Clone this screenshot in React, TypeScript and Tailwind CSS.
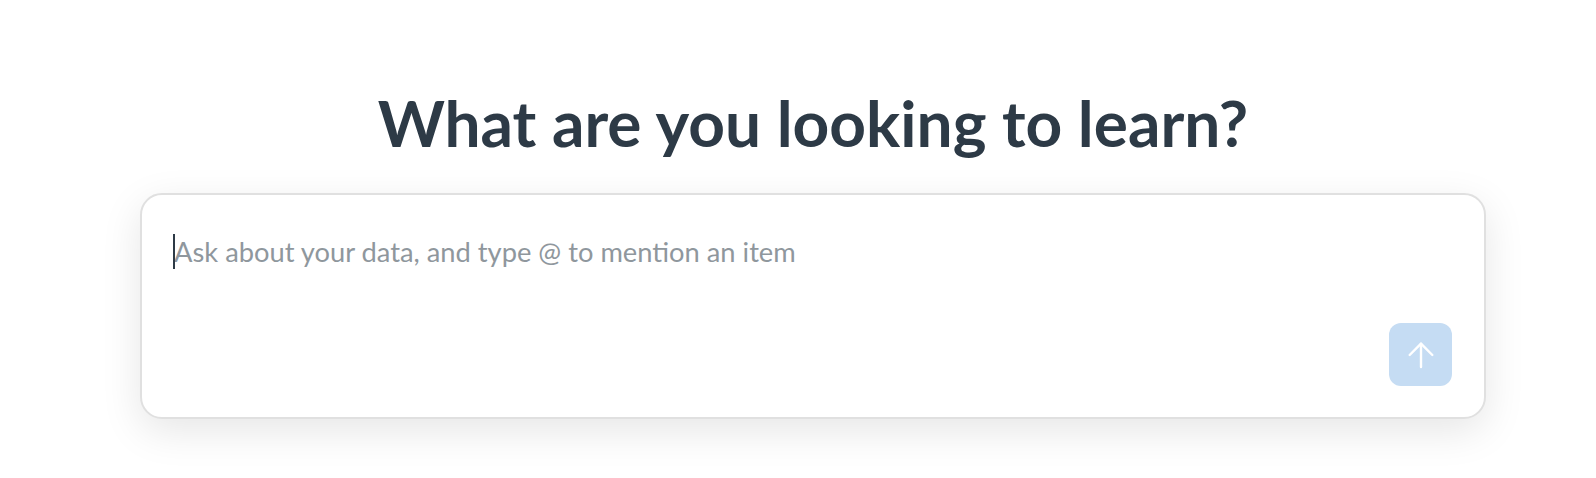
import React from "react";

export default function App() {
  return (
    <div className="w-[1596px] h-[478px] bg-white flex flex-col items-center pl-[30px]" style={{ fontFamily: "Lato, 'Noto Sans', sans-serif" }}>
      <h1 className="mt-[83px] text-[64px] leading-[80px] font-bold text-[#2d3a46]">
        What are you looking to learn?
      </h1>
      <div className="mt-[30px] w-[1346px] h-[226px] rounded-[22px] border-2 border-[#e0e0e0] bg-white shadow-[0_12px_40px_rgba(0,0,0,0.10)] flex flex-col pl-[30px] pr-[32px] pt-[37px] pb-[31px]">
        <div className="relative flex items-center h-[40px]">
          <span className="absolute left-[1px] top-[2px] w-[2px] h-[35px] bg-[#2d3a46]" />
          <span className="text-[27.3px] text-[#8f979d] pl-[2px]">Ask about your data, and type @ to mention an item</span>
        </div>
        <div className="flex-1" />
        <div className="flex justify-end">
          <button className="w-[63px] h-[63px] rounded-[12px] bg-[#c5dcf3] flex items-center justify-center">
            <svg width="32" height="32" viewBox="0 0 24 24" fill="none" stroke="white" strokeWidth="1.8" strokeLinecap="round" strokeLinejoin="round">
              <path d="M12 21V3.5" />
              <path d="M3.5 12l8.5-8.5 8.5 8.5" />
            </svg>
          </button>
        </div>
      </div>
    </div>
  );
}
